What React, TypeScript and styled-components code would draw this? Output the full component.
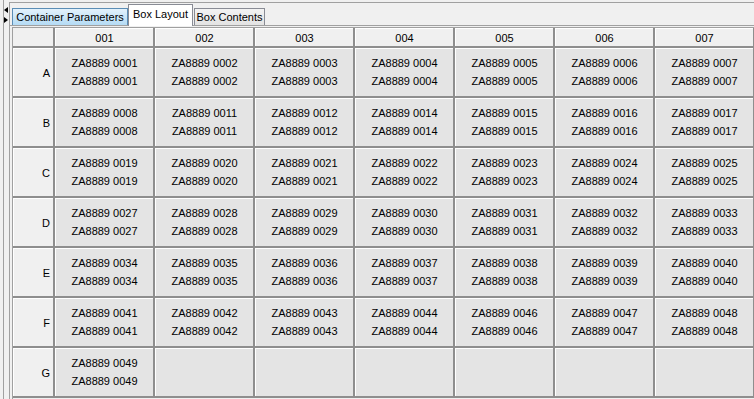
import React from 'react';
import styled, { createGlobalStyle, css } from 'styled-components';

const GlobalStyle = createGlobalStyle`
  html, body {
    margin: 0;
    padding: 0;
    background: #f0f0f0;
  }
  body {
    font-family: "Liberation Sans", Arial, sans-serif;
    font-size: 11px;
    color: #000;
  }
`;

const columns = ['001', '002', '003', '004', '005', '006', '007'];

const rows: { label: string; ids: (string | null)[] }[] = [
  { label: 'A', ids: ['0001', '0002', '0003', '0004', '0005', '0006', '0007'] },
  { label: 'B', ids: ['0008', '0011', '0012', '0014', '0015', '0016', '0017'] },
  { label: 'C', ids: ['0019', '0020', '0021', '0022', '0023', '0024', '0025'] },
  { label: 'D', ids: ['0027', '0028', '0029', '0030', '0031', '0032', '0033'] },
  { label: 'E', ids: ['0034', '0035', '0036', '0037', '0038', '0039', '0040'] },
  { label: 'F', ids: ['0041', '0042', '0043', '0044', '0046', '0047', '0048'] },
  { label: 'G', ids: ['0049', null, null, null, null, null, null] },
];

const Window = styled.div`
  display: flex;
  width: 754px;
  height: 399px;
  overflow: hidden;
  background: #f0f0f0;
`;

const LeftStub = styled.div`
  width: 3px;
  flex-shrink: 0;
`;

const Divider = styled.div`
  width: 5px;
  flex-shrink: 0;
  border-left: 1px solid #a0a0a0;
  display: flex;
  flex-direction: column;
  padding-top: 7px;
  gap: 4px;
`;

const Arrow = styled.div<{ $dir: 'left' | 'right' }>`
  width: 0;
  height: 0;
  border-top: 3.5px solid transparent;
  border-bottom: 3.5px solid transparent;
  ${({ $dir }) =>
    $dir === 'left'
      ? css`border-right: 4px solid #000;`
      : css`border-left: 4px solid #000;`}
`;

const RightPanel = styled.div`
  flex: 1;
  min-width: 0;
  margin-top: 2px;
  border-top: 1px solid #a0a0a0;
  border-left: 1px solid #a0a0a0;
  display: flex;
  flex-direction: column;
`;

const TabStrip = styled.div`
  height: 22px;
  display: flex;
  align-items: flex-end;
  padding-left: 2px;
  position: relative;
  z-index: 1;
`;

const Tab = styled.div<{ $state: 'hover' | 'selected' | 'normal'; $width: number }>`
  box-sizing: border-box;
  width: ${({ $width }) => $width}px;
  height: 17px;
  border: 1px solid #898c95;
  border-bottom: none;
  display: flex;
  align-items: center;
  justify-content: center;
  white-space: nowrap;
  ${({ $state }) =>
    $state === 'hover' &&
    css`
      background: linear-gradient(#e3f2fc, #b4dbf4);
      border-color: #5b8db5;
    `}
  ${({ $state }) =>
    $state === 'normal' &&
    css`
      background: linear-gradient(#f3f3f3, #e3e3e3);
      margin-left: 1px;
    `}
  ${({ $state }) =>
    $state === 'selected' &&
    css`
      height: 22px;
      margin-bottom: -1px;
      background: #fff;
      padding-bottom: 4px;
    `}
`;

const ContentPanel = styled.div`
  flex: 1;
  min-height: 0;
  border-top: 1px solid #a0a0a0;
  padding: 1px 0 0 2px;
`;

const ScrollPane = styled.div`
  height: 100%;
  border-top: 1px solid #a0a0a0;
  border-left: 1px solid #a0a0a0;
  overflow: hidden;
`;

const Grid = styled.div`
  display: grid;
  grid-template-columns: 40px repeat(7, 98px);
  grid-template-rows: 18px repeat(7, 48px);
  gap: 2px;
  padding: 0 2px 2px 0;
  width: max-content;
  background: #8e8e8e;
`;

const Corner = styled.div`
  background: #f0f0f0;
`;

const ColHeader = styled.div`
  background: #f0f0f0;
  border-top: 1px solid #fff;
  border-left: 1px solid #fff;
  display: flex;
  align-items: center;
  justify-content: center;
`;

const RowHeader = styled.div`
  background: #f0f0f0;
  border-top: 1px solid #fff;
  border-left: 1px solid #fff;
  display: flex;
  align-items: center;
  justify-content: flex-end;
  padding-right: 3px;
`;

const Cell = styled.div`
  background: #e4e4e4;
  border-top: 1px solid #fff;
  border-left: 1px solid #fff;
  display: flex;
  flex-direction: column;
  align-items: center;
  justify-content: center;
  line-height: 18px;
  padding-bottom: 1px;
  white-space: nowrap;
`;

const App: React.FC = () => (
  <>
    <GlobalStyle />
    <Window>
      <LeftStub />
      <Divider>
        <Arrow $dir="left" />
        <Arrow $dir="right" />
      </Divider>
      <RightPanel>
        <TabStrip>
          <Tab $state="hover" $width={116}>Container Parameters</Tab>
          <Tab $state="selected" $width={65}>Box Layout</Tab>
          <Tab $state="normal" $width={71}>Box Contents</Tab>
        </TabStrip>
        <ContentPanel>
          <ScrollPane>
            <Grid>
              <Corner />
              {columns.map((c) => (
                <ColHeader key={c}>{c}</ColHeader>
              ))}
              {rows.map((row) => (
                <React.Fragment key={row.label}>
                  <RowHeader>{row.label}</RowHeader>
                  {row.ids.map((id, i) => (
                    <Cell key={i}>
                      {id && (
                        <>
                          <span>ZA8889 {id}</span>
                          <span>ZA8889 {id}</span>
                        </>
                      )}
                    </Cell>
                  ))}
                </React.Fragment>
              ))}
            </Grid>
          </ScrollPane>
        </ContentPanel>
      </RightPanel>
    </Window>
  </>
);

export default App;
